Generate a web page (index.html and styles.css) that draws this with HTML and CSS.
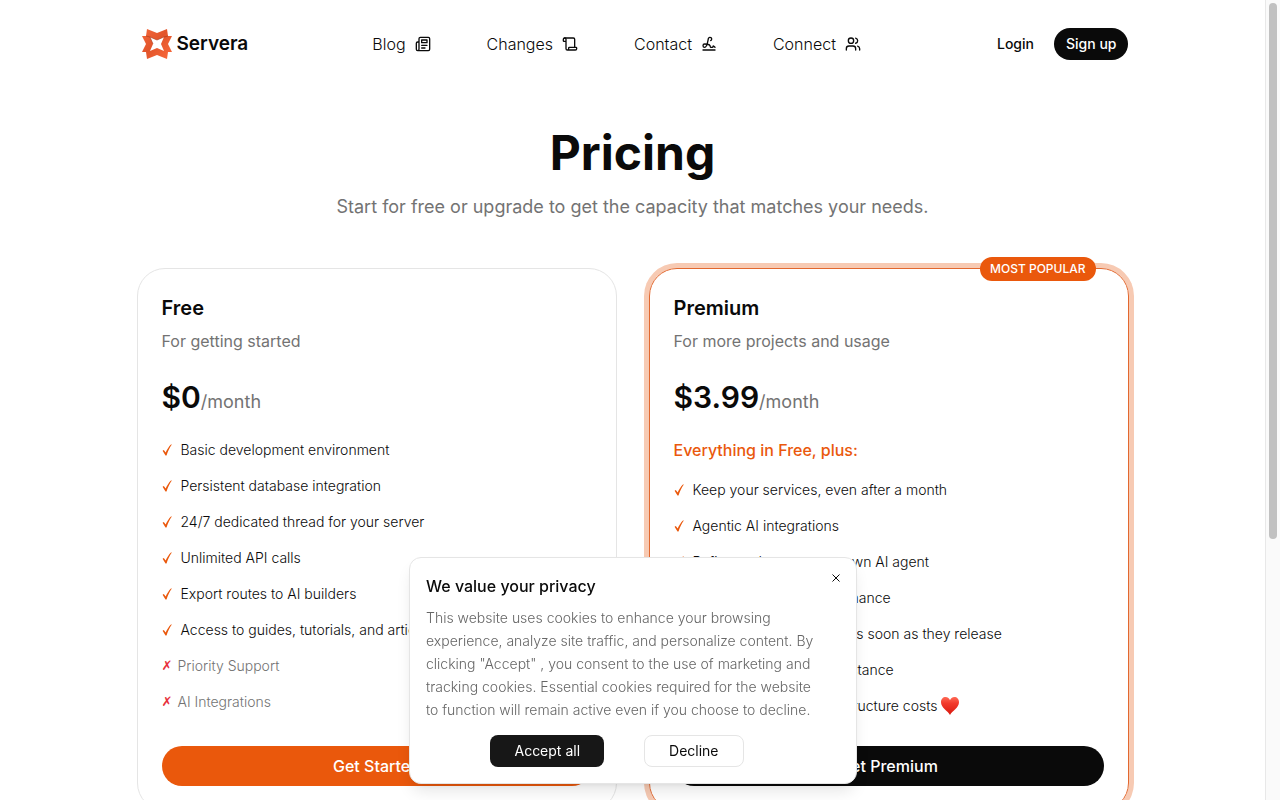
FILE: index.html
```html
<!DOCTYPE html>
<html lang="en">
<head>
<meta charset="utf-8">
<title>Servera – Pricing</title>
<meta name="viewport" content="width=device-width, initial-scale=1">
<link rel="stylesheet" href="styles.css">
</head>
<body>
<div class="shell">
  <div class="page">
    <header class="header">
      <a class="brand" href="#">
        <svg class="brand-mark" viewBox="0 0 32 32" aria-hidden="true">
          <defs><linearGradient id="flame" x1="0" y1="0" x2="1" y2="1"><stop offset="0" stop-color="#f4683c"/><stop offset=".45" stop-color="#e2552b"/><stop offset="1" stop-color="#fb6a3c"/></linearGradient></defs>
          <path fill="url(#flame)" fill-rule="evenodd" d="M6 1 16 5 26 1 27 8 31 8 27 16 31 24 27 24 26 31 16 27 6 31 5 24 1 24 5 16 1 8 5 8ZM9 9 12 16 9 23 16 20 23 23 20 16 23 9 16 12Z"/>
          <path fill="none" stroke="#a83a1c" stroke-width="1" opacity=".6" d="M5 8 9 9 16 12 23 9 27 8M9 9 12 16"/>
        </svg>
        <span>Servera</span>
      </a>
      <nav class="nav" aria-label="Main">
        <a href="#">Blog
          <svg class="icon" viewBox="0 0 24 24" aria-hidden="true"><path d="M4 22h16a2 2 0 0 0 2-2V4a2 2 0 0 0-2-2H8a2 2 0 0 0-2 2v16a2 2 0 0 1-2 2Zm0 0a2 2 0 0 1-2-2v-9c0-1.1.9-2 2-2h2"/><path d="M18 14h-8M15 18h-5M10 6h8v4h-8V6Z"/></svg></a>
        <a href="#">Changes
          <svg class="icon" viewBox="0 0 24 24" aria-hidden="true"><path d="M19 17V5a2 2 0 0 0-2-2H4"/><path d="M8 21h12a2 2 0 0 0 2-2v-1a1 1 0 0 0-1-1H11a1 1 0 0 0-1 1v1a2 2 0 1 1-4 0V5a2 2 0 1 0-4 0v2a1 1 0 0 0 1 1h3"/></svg></a>
        <a href="#">Contact
          <svg class="icon" viewBox="0 0 24 24" aria-hidden="true"><path d="m21 17-2.156-1.868A.5.5 0 0 0 18 15.5v.5a1 1 0 0 1-1 1h-2a1 1 0 0 1-1-1c0-2.545-3.991-3.97-8.5-4a1 1 0 0 0 0 5c4.153 0 4.745-11.295 5.708-13.5a2.5 2.5 0 1 1 3.31 3.284"/><path d="M3 21h18"/></svg></a>
        <a href="#">Connect
          <svg class="icon" viewBox="0 0 24 24" aria-hidden="true"><path d="M16 21v-2a4 4 0 0 0-4-4H6a4 4 0 0 0-4 4v2"/><circle cx="9" cy="7" r="4"/><path d="M22 21v-2a4 4 0 0 0-3-3.870M16 3.130a4 4 0 0 1 0 7.750"/></svg></a>
      </nav>
      <div class="account">
        <a class="login" href="#">Login</a>
        <a class="signup" href="#">Sign up</a>
      </div>
    </header>

    <main class="main">
      <div class="intro">
        <h1>Pricing</h1>
        <p>Start for free or upgrade to get the capacity that matches your needs.</p>
      </div>
      <div class="plans">
        <section class="plan">
          <h2>Free</h2>
          <p class="summary">For getting started</p>
          <p class="price"><strong>$0</strong><span>/month</span></p>
          <ul class="features">
            <li>Basic development environment</li>
            <li>Persistent database integration</li>
            <li>24/7 dedicated thread for your server</li>
            <li>Unlimited API calls</li>
            <li>Export routes to AI builders</li>
            <li>Access to guides, tutorials, and articles</li>
            <li class="missing">Priority Support</li>
            <li class="missing">AI Integrations</li>
          </ul>
          <button class="cta cta-free" type="button">Get Started</button>
        </section>
        <section class="plan plan-premium">
          <span class="badge">MOST POPULAR</span>
          <h2>Premium</h2>
          <p class="summary">For more projects and usage</p>
          <p class="price"><strong>$3.99</strong><span>/month</span></p>
          <p class="plus">Everything in Free, plus:</p>
          <ul class="features">
            <li>Keep your services, even after a month</li>
            <li>Agentic AI integrations</li>
            <li>Refine and create your own AI agent</li>
            <li>Enhanced server performance</li>
            <li>Access to new features as soon as they release</li>
            <li>Priority support and assistance</li>
            <li>Help us cover our infrastructure costs
              <svg class="heart" viewBox="0 0 20 20" role="img" aria-label="heart"><defs><linearGradient id="heart" x1="0" y1="0" x2="0" y2="1"><stop offset="0" stop-color="#ff6a55"/><stop offset=".35" stop-color="#f23a2c"/><stop offset="1" stop-color="#d8190f"/></linearGradient></defs><path fill="url(#heart)" d="M10 19C8 15 1 12 1 6.300C1 3 3 1 5.600 1C7.800 1 9.400 2.300 10 4.200C10.600 2.300 12.200 1 14.400 1C17 1 19 3 19 6.300C19 12 12 15 10 19Z"/></svg></li>
          </ul>
          <button class="cta cta-premium" type="button">Get Premium</button>
        </section>
      </div>
    </main>
  </div>
  <div class="rail" aria-hidden="true"><div class="thumb"></div></div>
</div>

<div class="consent" role="dialog" aria-labelledby="consent-title">
  <h2 id="consent-title">We value your privacy</h2>
  <p>This website uses cookies to enhance your browsing experience, analyze site traffic, and personalize content. By clicking "Accept" , you consent to the use of marketing and tracking cookies. Essential cookies required for the website to function will remain active even if you choose to decline.</p>
  <div class="choices">
    <button class="accept" type="button">Accept all</button>
    <button class="decline" type="button">Decline</button>
  </div>
  <button class="close" type="button" aria-label="Close"><svg viewBox="0 0 8 8" aria-hidden="true"><path d="M.5.500l7 7M7.500.500l-7 7"/></svg></button>
</div>
</body>
</html>
```
FILE: styles.css
```css
* { box-sizing: border-box; }

body, h1, h2, p, ul { margin: 0; padding: 0; }

body {
  background: #fff;
  color: #0a0a0a;
  font: 400 14px/24px Inter, "Liberation Sans", sans-serif;
}

a { color: inherit; text-decoration: none; }
button { font: inherit; cursor: pointer; border: 0; }

.shell { display: flex; height: 100vh; overflow: hidden; }
.page { flex: 1; min-width: 0; overflow-y: auto; scrollbar-width: none; }

.rail { width: 15px; padding: 3px; background: #fafafa; border-left: 1px solid #e8e8e8; }
.thumb { width: 8px; height: 67.5%; margin: 0 auto; border-radius: 4px; background: #c1c1c1; }

.header {
  display: flex; align-items: center; justify-content: space-between;
  max-width: 992px; height: 88px; margin: 0 auto; padding-left: 4px;
}
.brand { display: flex; align-items: center; gap: 4px; font-size: 19px; font-weight: 600; }
.brand-mark { width: 32px; height: 32px; }
.nav { display: flex; gap: 56px; font-size: 16px; font-weight: 300; }
.nav a { display: flex; align-items: center; gap: 9px; }
.icon { width: 16px; height: 16px; fill: none; stroke: currentColor; stroke-width: 2; stroke-linecap: round; stroke-linejoin: round; }
.account { display: flex; align-items: center; gap: 8px; font-weight: 500; }
.login, .signup { padding: 4px 12px; border-radius: 16px; }
.signup { background: #0a0a0a; color: #fff; }

.main { max-width: 992px; margin: 0 auto; padding: 36px 0 64px; }
.intro { text-align: center; margin-bottom: 47px; }
.intro h1 { font-size: 48px; line-height: 58px; font-weight: 700; }
.intro p { margin-top: 11px; font-size: 18px; line-height: 28px; color: #737373; }

.plans { display: grid; grid-template-columns: 1fr 1fr; gap: 32px; }
.plan {
  display: flex; flex-direction: column;
  padding: 24px; border: 1px solid #e5e5e5; border-radius: 28px;
}
.plan-premium { position: relative; border-color: #e2682f; box-shadow: 0 0 0 5px #f7cab3; }
.badge {
  position: absolute; top: -12px; right: 32px;
  padding: 0 10px; border-radius: 12px;
  background: #ea580c; color: #fff; font-size: 12px; font-weight: 500;
}
.plan h2 { font-size: 20px; line-height: 30px; font-weight: 600; }
.summary { margin-top: 6px; font-size: 16px; color: #737373; }
.price { margin-top: 24px; line-height: 40px; font-size: 18px; color: #737373; }
.price strong { font-size: 30px; font-weight: 600; color: #0a0a0a; }
.plus { margin-top: 16px; font-size: 16px; font-weight: 500; color: #ea580c; }
.features { display: grid; gap: 12px; margin: 16px 0 28px; list-style: none; font-weight: 300; }
.features li { display: flex; align-items: center; }
.features li::before {
  content: ""; width: 10px; height: 12px; margin-right: 9px;
  background: url("data:image/svg+xml,%3Csvg xmlns='http://www.w3.org/2000/svg' viewBox='0 0 10 12'%3E%3Cpath fill='%23ea580c' d='M.6 6.800 1.800 6 3.700 8.600C5 5.600 6.800 2.600 9.200.300L9.700.800C7.600 3.700 5.800 7.400 4.500 11.500H3.500Z'/%3E%3C/svg%3E") center / contain no-repeat;
}
.features .missing { color: #737373; }
.features .missing::before {
  content: "✗"; width: 16px; height: auto; margin: 0; background: none;
  color: #e7303c; font-family: "DejaVu Sans", sans-serif; font-size: 13px; font-weight: 700;
}
.heart { width: 20px; height: 20px; margin-left: 3px; }
.cta { height: 40px; margin-top: auto; border-radius: 20px; color: #fff; font-size: 16px; font-weight: 500; }
.cta-free { background: #ea580c; }
.cta-premium { background: #0a0a0a; }

.consent {
  position: fixed; bottom: 16px; left: calc(50% - 7px); transform: translateX(-50%);
  width: 448px; max-width: calc(100% - 32px);
  padding: 16px 32px 16px 16px;
  background: #fff; border: 1px solid #e5e5e5; border-radius: 12px;
  box-shadow: 0 10px 16px -3px rgba(0, 0, 0, .1), 0 4px 6px -4px rgba(0, 0, 0, .1);
}
.consent h2 { font-size: 16px; font-weight: 500; }
.consent p { margin-top: 8px; line-height: 23px; font-weight: 300; color: #666; }
.choices { display: flex; justify-content: center; gap: 40px; margin-top: 14px; padding-right: 16px; }
.choices button { height: 32px; padding: 0 24px; border-radius: 8px; }
.accept { background: #171717; color: #fff; }
.decline { background: #fff; color: #0a0a0a; border: 1px solid #e5e5e5; }
.close { position: absolute; top: 12px; right: 12px; display: grid; place-items: center; width: 16px; height: 16px; padding: 0; background: none; }
.close svg { width: 8px; height: 8px; stroke: #0a0a0a; stroke-width: 1; }
```
